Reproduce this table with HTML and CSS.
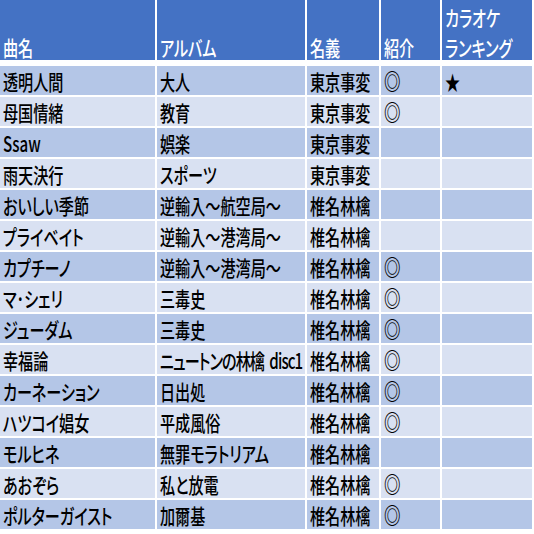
FILE: index.html
```html
<!DOCTYPE html>
<html lang="ja">
<head>
<meta charset="utf-8">
<link rel="stylesheet" href="styles.css">
</head>
<body>
<table class="songs">
  <colgroup>
    <col class="c-title"><col class="c-album"><col class="c-artist"><col class="c-intro"><col class="c-rank">
  </colgroup>
  <thead>
    <tr>
      <th><span class="t">曲名</span></th>
      <th><span class="t">アルバム</span></th>
      <th><span class="t">名義</span></th>
      <th><span class="t">紹介</span></th>
      <th><span class="t">カラオケ<br>ランキング</span></th>
    </tr>
  </thead>
  <tbody>
    <tr><td><span class="t">透明人間</span></td><td><span class="t">大人</span></td><td><span class="t">東京事変</span></td><td><span class="t mark">◎</span></td><td><span class="t">★</span></td></tr>
    <tr><td><span class="t">母国情緒</span></td><td><span class="t">教育</span></td><td><span class="t">東京事変</span></td><td><span class="t mark">◎</span></td><td></td></tr>
    <tr><td><span class="t">Ssaw</span></td><td><span class="t">娯楽</span></td><td><span class="t">東京事変</span></td><td></td><td></td></tr>
    <tr><td><span class="t">雨天決行</span></td><td><span class="t">スポーツ</span></td><td><span class="t">東京事変</span></td><td></td><td></td></tr>
    <tr><td><span class="t">おいしい季節</span></td><td><span class="t">逆輸入～航空局～</span></td><td><span class="t">椎名林檎</span></td><td></td><td></td></tr>
    <tr><td><span class="t">プライベイト</span></td><td><span class="t">逆輸入～港湾局～</span></td><td><span class="t">椎名林檎</span></td><td></td><td></td></tr>
    <tr><td><span class="t">カプチーノ</span></td><td><span class="t">逆輸入～港湾局～</span></td><td><span class="t">椎名林檎</span></td><td><span class="t mark">◎</span></td><td></td></tr>
    <tr><td><span class="t">マ･シェリ</span></td><td><span class="t">三毒史</span></td><td><span class="t">椎名林檎</span></td><td><span class="t mark">◎</span></td><td></td></tr>
    <tr><td><span class="t">ジューダム</span></td><td><span class="t">三毒史</span></td><td><span class="t">椎名林檎</span></td><td><span class="t mark">◎</span></td><td></td></tr>
    <tr><td><span class="t">幸福論</span></td><td><span class="t tight">ニュートンの林檎 disc1</span></td><td><span class="t">椎名林檎</span></td><td><span class="t mark">◎</span></td><td></td></tr>
    <tr><td><span class="t">カーネーション</span></td><td><span class="t">日出処</span></td><td><span class="t">椎名林檎</span></td><td><span class="t mark">◎</span></td><td></td></tr>
    <tr><td><span class="t">ハツコイ娼女</span></td><td><span class="t">平成風俗</span></td><td><span class="t">椎名林檎</span></td><td><span class="t mark">◎</span></td><td></td></tr>
    <tr><td><span class="t">モルヒネ</span></td><td><span class="t">無罪モラトリアム</span></td><td><span class="t">椎名林檎</span></td><td></td><td></td></tr>
    <tr><td><span class="t">あおぞら</span></td><td><span class="t">私と放電</span></td><td><span class="t">椎名林檎</span></td><td><span class="t mark">◎</span></td><td></td></tr>
    <tr><td><span class="t">ポルターガイスト</span></td><td><span class="t">加爾基</span></td><td><span class="t">椎名林檎</span></td><td><span class="t mark">◎</span></td><td></td></tr>
  </tbody>
</table>
</body>
</html>
```
FILE: styles.css
```css
html, body {
  margin: 0;
  padding: 0;
  background: #ffffff;
}
.songs {
  border-collapse: separate;
  border-spacing: 0;
  table-layout: fixed;
  width: 532px;
  font-family: "Noto Sans CJK JP", "Noto Sans", sans-serif;
  font-size: 21px;
  font-weight: 500;
  font-feature-settings: "palt" 1;
  color: #000000;
}
.c-title { width: 157px; }
.c-album { width: 150px; }
.c-artist { width: 74px; }
.c-intro { width: 61px; }
.c-rank { width: 90px; }
.songs th,
.songs td {
  padding: 0 0 0 3px;
  border-right: 2px solid #ffffff;
  border-bottom: 2px solid #ffffff;
  white-space: nowrap;
  text-align: left;
}
.songs th:last-child,
.songs td:last-child {
  border-right: none;
}
.songs th {
  height: 59px;
  background: #4472c4;
  color: #ffffff;
  font-weight: 500;
  vertical-align: bottom;
  border-bottom: 6px solid #ffffff;
  line-height: 30px;
}
.songs th .t {
  transform: translateY(2px) scaleX(0.72);
}
.songs td {
  height: 29px;
  line-height: 29px;
  vertical-align: middle;
}
.songs tbody tr:nth-child(odd) td { background: #b4c6e7; }
.songs tbody tr:nth-child(even) td { background: #d9e1f2; }
.t {
  display: inline-block;
  transform: translateY(1px) scaleX(0.72);
  transform-origin: left center;
  white-space: nowrap;
}
.t.tight {
  letter-spacing: -1.3px;
  word-spacing: 4px;
}
.t.mark {
  font-size: 23px;
  line-height: 29px;
  vertical-align: top;
  font-weight: 700;
  font-feature-settings: normal;
  transform: translateY(0) scaleX(0.72);
}
```
